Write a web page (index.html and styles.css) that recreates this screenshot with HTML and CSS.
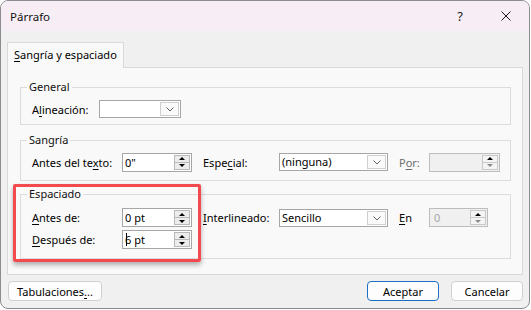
FILE: index.html
```html
<!DOCTYPE html>
<html lang="es">
<head>
<meta charset="utf-8">
<title>Párrafo</title>
<link rel="stylesheet" href="styles.css">
</head>
<body>
<div class="window">
  <div class="titlebar">
    <span class="title">Párrafo</span>
    <span class="cap help">?</span>
    <span class="cap close"><svg width="10" height="10" viewBox="0 0 10 10"><path d="M0.5 0.5 L9.5 9.5 M9.5 0.5 L0.5 9.5" stroke="#1a1a1a" stroke-width="1" fill="none"/></svg></span>
  </div>
  <div class="body">
    <div class="tabs"><div class="tab"><u>S</u>angría y espaciado</div></div>
    <div class="panel">
      <fieldset class="group g-general">
        <legend>General</legend>
        <div class="row r-general">
          <span class="lbl w-ali">A<u>l</u>ineación:</span>
          <div class="combo w-ali-c"><span class="cv"></span><span class="drop"><svg width="8" height="5" viewBox="0 0 8 5"><path d="M0.5 0.5 L4 4 L7.5 0.5" stroke="#666" fill="none"/></svg></span></div>
        </div>
      </fieldset>

      <fieldset class="group g-sangria">
        <legend>Sangría</legend>
        <div class="row r-sangria">
          <span class="lbl w1">Antes del te<u>x</u>to:</span>
          <div class="spin w-spin"><span class="val">0"</span><span class="btns"><span class="up"></span><span class="dn"></span></span></div>
          <span class="lbl w2">Espe<u>c</u>ial:</span>
          <div class="combo w-combo"><span class="cv">(ninguna)</span><span class="drop"><svg width="8" height="5" viewBox="0 0 8 5"><path d="M0.5 0.5 L4 4 L7.5 0.5" stroke="#666" fill="none"/></svg></span></div>
          <span class="lbl w3 dis">P<u>o</u>r:</span>
          <div class="spin disabled w-por"><span class="val"></span><span class="btns"><span class="up"></span><span class="dn"></span></span></div>
        </div>
      </fieldset>

      <fieldset class="group g-esp">
        <legend>Espaciado</legend>
        <div class="row r-esp1">
          <span class="lbl w1"><u>A</u>ntes de:</span>
          <div class="spin w-spin"><span class="val">0 pt</span><span class="btns"><span class="up"></span><span class="dn"></span></span></div>
          <span class="lbl w2"><u>I</u>nterlineado:</span>
          <div class="combo w-combo"><span class="cv">Sencillo</span><span class="drop"><svg width="8" height="5" viewBox="0 0 8 5"><path d="M0.5 0.5 L4 4 L7.5 0.5" stroke="#666" fill="none"/></svg></span></div>
          <span class="lbl w3"><u>E</u>n</span>
          <div class="spin disabled w-en"><span class="val gray">0</span><span class="btns"><span class="up"></span><span class="dn"></span></span></div>
        </div>
        <div class="row r-esp2">
          <span class="lbl w1"><u>D</u>espués de:</span>
          <div class="spin w-spin"><span class="val"><span class="caret"></span>6 pt</span><span class="btns"><span class="up"></span><span class="dn"></span></span></div>
        </div>
      </fieldset>
    </div>
    <div class="footer">
      <button class="btn b-tab">Tabulaciones<u>.</u>..</button>
      <button class="btn b-ok">Aceptar</button>
      <button class="btn b-cancel">Cancelar</button>
    </div>
  </div>
  <div class="highlight"></div>
</div>
</body>
</html>
```
FILE: styles.css
```css
* { box-sizing: border-box; }
html, body { margin: 0; padding: 0; }
body {
  background: #ffffff;
  font-family: "Noto Sans", "DejaVu Sans", sans-serif;
  font-size: 11px;
  color: #000;
  width: 531px;
  height: 310px;
  overflow: hidden;
}
u { text-decoration: underline; text-underline-offset: 2px; text-decoration-thickness: 1px; }

.window {
  position: relative;
  width: 530px;
  height: 309px;
  border: 1px solid #8c8c8c;
  border-radius: 8px;
  overflow: hidden;
  display: flex;
  flex-direction: column;
  background: #f0f0f0;
}

.titlebar {
  height: 30px;
  flex: none;
  background: #f7eef5;
  display: flex;
  align-items: center;
  padding-left: 9px;
}
.title { font-size: 11.5px; color: #111; }
.cap {
  width: 46px;
  height: 30px;
  display: flex;
  align-items: center;
  justify-content: center;
}
.help { margin-left: auto; font-size: 13px; color: #1a1a1a; padding-bottom: 1px; }
.close svg { display: block; }

.body {
  flex: 1;
  display: flex;
  flex-direction: column;
  padding: 11px 6px 0 6px;
}

.tabs { display: flex; height: 25px; position: relative; z-index: 1; }
.tab {
  width: 117px;
  height: 26px;
  background: #f9f9f9;
  border: 1px solid #d9d9d9;
  border-bottom: none;
  padding: 3px 0 0 6px;
  line-height: 18px;
}

.panel {
  height: 208px;
  background: #f9f9f9;
  border: 1px solid #d9d9d9;
  padding: 11px 11px 0 12px;
  display: flex;
  flex-direction: column;
}

.group {
  margin: 0;
  padding: 0 0 0 11px;
  border: 1px solid #dcdcdc;
  min-width: 0;
}
.group legend {
  margin-left: -5px;
  padding: 0 2px;
  line-height: 16px;
  height: 16px;
  color: #111;
}
.g-general { height: 46px; }
.g-sangria { height: 49px; margin-top: 7px; }
.g-esp { height: 73px; margin-top: 5px; }

.row { display: flex; align-items: center; }
.r-general { height: 18px; margin-top: 5px; }
.r-sangria { height: 20px; margin-top: 4px; }
.r-esp1 { height: 19px; margin-top: 6px; }
.r-esp2 { height: 19px; margin-top: 3px; }

.lbl { flex: none; white-space: nowrap; }
.dis { color: #6d6d6d; }
.w-ali { width: 67px; }
.w1 { width: 90px; }
.w2 { width: 76px; margin-left: 11px; }
.w3 { width: 30px; margin-left: 11px; }

.combo {
  flex: none;
  height: 18px;
  border: 1px solid #a6a6a6;
  background: #fff;
  display: flex;
  align-items: stretch;
}
.w-ali-c { width: 82px; }
.w-combo { width: 109px; }
.combo .cv { flex: 1; padding-left: 2px; line-height: 16px; white-space: nowrap; }
.combo .drop {
  width: 19px;
  margin: 1px;
  border: 1px solid #cfcfcf;
  background: #fafafa;
  display: flex;
  align-items: center;
  justify-content: center;
}
.combo .drop svg { display: block; margin-top: 1px; }

.spin {
  flex: none;
  height: 19px;
  border: 1px solid #a6a6a6;
  background: #fff;
  display: flex;
  align-items: stretch;
}
.w-spin { width: 70px; }
.w-por { width: 71px; }
.w-en { width: 59px; }
.spin .val { flex: 1; padding-left: 2px; line-height: 17px; white-space: nowrap; position: relative; }
.spin .gray { color: #a8a8a8; padding-left: 4px; }
.spin .btns {
  width: 16px;
  margin: 0 1px 0 0;
  display: flex;
  flex-direction: column;
  padding: 1px 0;
}
.spin .up, .spin .dn {
  flex: 1;
  background: #ececec;
  border: 1px solid #b9b9b9;
  display: flex;
  align-items: center;
  justify-content: center;
}
.spin .dn { border-top: none; }
.spin .up::after {
  content: "";
  border-left: 3px solid transparent;
  border-right: 3px solid transparent;
  border-bottom: 3px solid #000;
}
.spin .dn::after {
  content: "";
  border-left: 3px solid transparent;
  border-right: 3px solid transparent;
  border-top: 3px solid #000;
}
.spin.disabled { background: #f0f0f0; border-color: #bdbdbd; }
.spin.disabled .up, .spin.disabled .dn { background: #f4f4f4; border-color: #c9c9c9; }
.spin.disabled .dn::after { border-top-color: #8a8a8a; }

.caret {
  position: absolute;
  left: 3px;
  top: 2px;
  width: 1px;
  height: 13px;
  background: #000;
}

.footer {
  display: flex;
  align-items: center;
  padding: 6px 0 0 1px;
}
.btn {
  font-family: inherit;
  font-size: 11px;
  color: #000;
  height: 20px;
  background: #fdfdfd;
  border: 1px solid #d0d0d0;
  border-radius: 4px;
  padding: 0;
  line-height: 17px;
}
.b-tab { width: 94px; }
.b-ok { width: 72px; margin-left: auto; border-color: #1b6fc2; }
.b-cancel { width: 72px; margin-left: 12px; }

.highlight {
  position: absolute;
  left: 12px;
  top: 183px;
  width: 188px;
  height: 78px;
  border: 3px solid #f24a4f;
  border-radius: 2px;
  box-shadow: 0 3px 5px rgba(0, 0, 0, 0.3);
  pointer-events: none;
}
```
